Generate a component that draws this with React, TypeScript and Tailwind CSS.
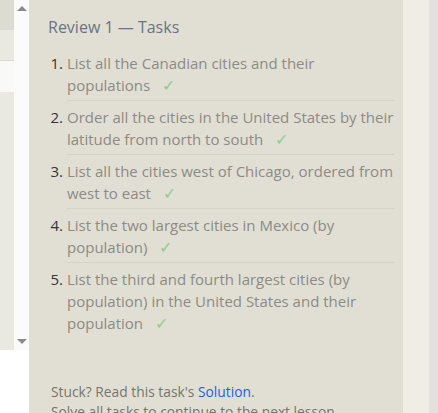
import React from "react";

const tasks = [
  "List all the Canadian cities and their populations",
  "Order all the cities in the United States by their latitude from north to south",
  "List all the cities west of Chicago, ordered from west to east",
  "List the two largest cities in Mexico (by population)",
  "List the third and fourth largest cities (by population) in the United States and their population",
];

const font = { fontFamily: '"Open Sans", "Noto Sans", sans-serif' };

export default function App() {
  return (
    <div className="flex h-[413px] w-[438px] overflow-hidden bg-white" style={font}>
      {/* left editor sliver + scrollbar */}
      <div className="flex w-[29px] flex-col">
        <div className="flex h-[350px]">
          <div className="flex w-[14px] flex-col bg-[#e9e8e1]">
            <div className="h-[30px] bg-[#dcdcd2]" />
            <div className="h-[31px] border-b border-[#d8d8d0]" />
            <div className="h-[31px] bg-[#f9f9f8]" />
          </div>
          <div className="flex w-[15px] flex-col items-center justify-between bg-[#fbfbfb] py-[6px]">
            <div className="h-0 w-0 border-x-[5px] border-b-[5px] border-x-transparent border-b-[#8a8a8a]" />
            <div className="h-0 w-0 border-x-[5px] border-t-[5px] border-x-transparent border-t-[#8a8a8a]" />
          </div>
        </div>
      </div>

      {/* tasks panel */}
      <div className="flex w-[374px] flex-col bg-[#e1dfd4] pl-[19px] pr-[9px] pt-[16px]">
        <h2 className="text-[16px] leading-[22px] text-[#6b7382]">Review 1 — Tasks</h2>
        <ol className="mt-[14px]">
          {tasks.map((t, i) => (
            <li key={i} className={`flex text-[15px] leading-[22px] ${i > 0 ? "pt-[5px]" : ""}`}>
              <span className="w-[19px] shrink-0 pr-[4px] text-right text-[#303640]">{i + 1}.</span>
              <span
                className={`flex-1 text-[#8c8b85] ${
                  i < tasks.length - 1 ? "border-b border-[#d5d3c8] pb-[4px]" : ""
                }`}
              >
                {t}
                <span className="ml-[12px] text-[16px] leading-none text-[#8fcb8f]">✓</span>
              </span>
            </li>
          ))}
        </ol>
        <div className="mt-[48px] pl-[3px] text-[13.8px] leading-[20px] text-[#76756f]">
          <p>
            Stuck? Read this task's <span className="text-[#1f5fe0]">Solution</span>.
          </p>
          <p className="whitespace-nowrap">Solve all tasks to continue to the next lesson.</p>
        </div>
      </div>

      <div className="w-[26px] bg-[#efede5]" />
      <div className="flex-1 bg-[#e3e0dd]" />
    </div>
  );
}
